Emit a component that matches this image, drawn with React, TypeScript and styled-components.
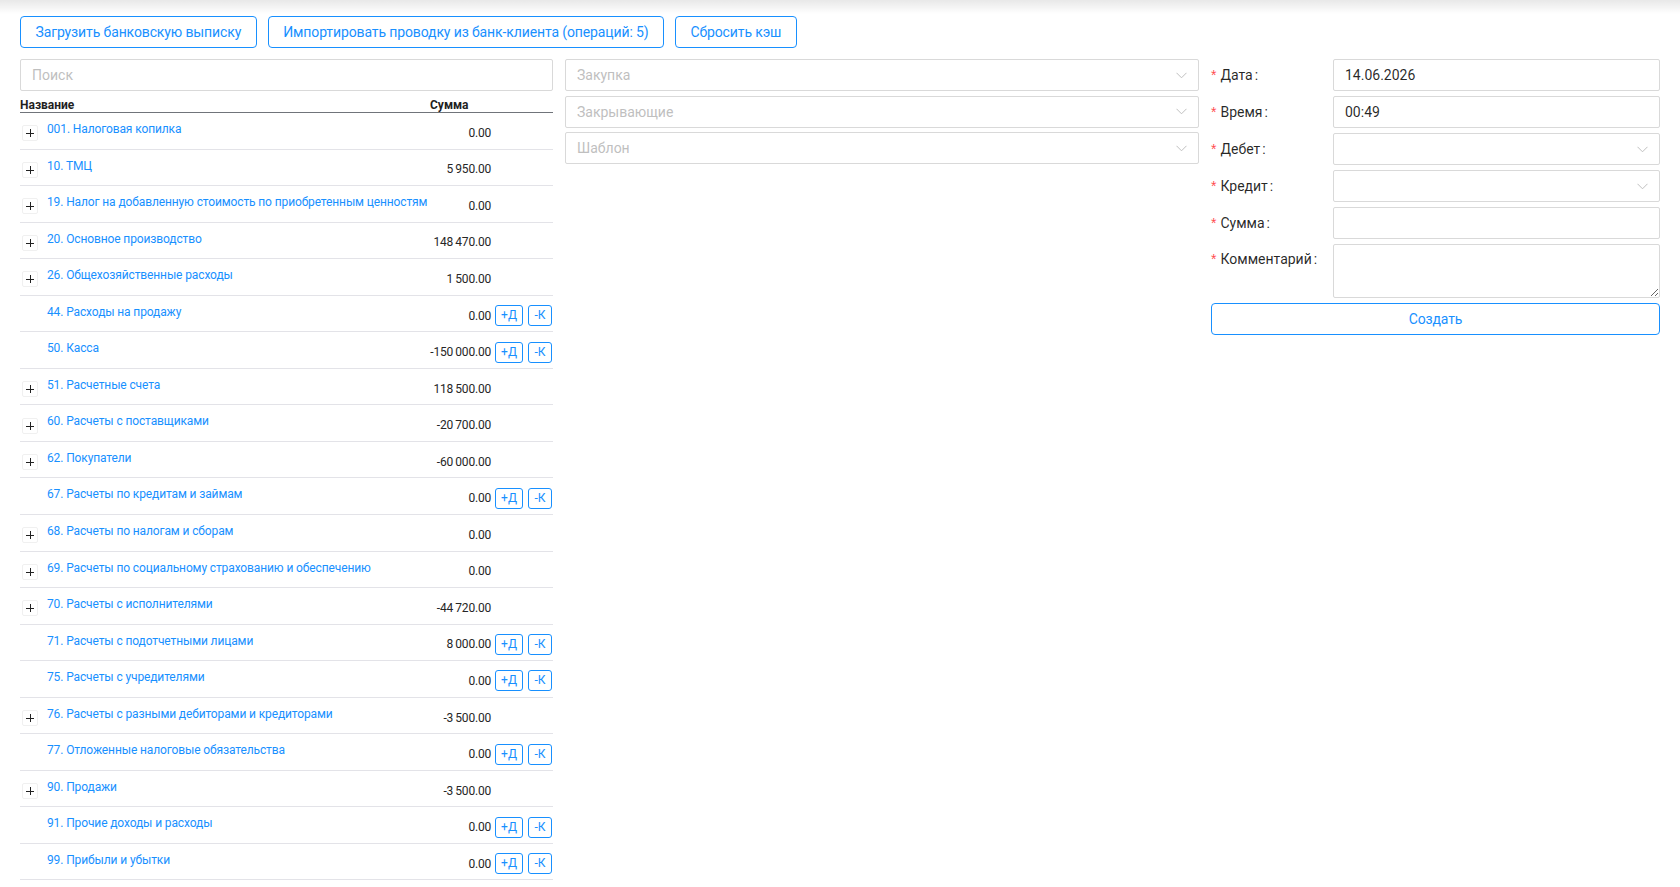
import styled, { createGlobalStyle } from "styled-components";

const GlobalStyle = createGlobalStyle`
    body {
        margin: 0;
        background: #fff;
        font-family: Roboto, "Noto Sans", sans-serif;
        color: rgba(0, 0, 0, 0.85);
    }
    * {
        box-sizing: border-box;
    }
`;

const Page = styled.div`
    padding: 0 20px 0 20px;
`;

const TopShade = styled.div`
    height: 14px;
    margin: 0 -20px 2px -20px;
    background: linear-gradient(to bottom, rgba(0, 0, 0, 0.09), rgba(0, 0, 0, 0));
`;

const Toolbar = styled.div`
    display: flex;
    gap: 11px;
`;

const Button = styled.button<{ $block?: boolean }>`
    height: 32px;
    padding: 0 14.5px;
    width: ${p => (p.$block ? "100%" : "auto")};
    border: 1px solid #1890ff;
    border-radius: 4px;
    background: #fff;
    color: #1890ff;
    font-family: inherit;
    font-size: 14px;
    letter-spacing: -0.12px;
    cursor: pointer;
`;

const Columns = styled.div`
    display: grid;
    grid-template-columns: 533px 634px 1fr;
    column-gap: 12px;
    margin-top: 11px;
    align-items: start;
`;

const Stack = styled.div<{ $gap?: number }>`
    display: flex;
    flex-direction: column;
    gap: ${p => p.$gap ?? 0}px;
`;

const TextInput = styled.input`
    height: 32px;
    width: 100%;
    padding: 0 11px;
    border: 1px solid #d9d9d9;
    border-radius: 2px;
    font-family: inherit;
    font-size: 14px;
    color: rgba(0, 0, 0, 0.85);
    outline: none;
    &::placeholder {
        color: #bfbfbf;
    }
`;

const TextArea = styled.textarea`
    height: 54px;
    width: 100%;
    padding: 4px 11px;
    border: 1px solid #d9d9d9;
    border-radius: 2px;
    font-family: inherit;
    font-size: 14px;
    resize: vertical;
    outline: none;
    display: block;
`;

/* account table */

const Table = styled.div`
    display: flex;
    flex-direction: column;
`;

const Grid = styled.div`
    display: grid;
    grid-template-columns: 27px 379px 65px 62px;
`;

const HeadRow = styled(Grid)`
    height: 22px;
    align-items: end;
    border-bottom: 1.5px solid #70747a;
    font-size: 12px;
    font-weight: 700;
    line-height: 13px;
    color: #1f1f1f;
`;

const HeadCell = styled.div<{ $span?: number; $pad?: number }>`
    grid-column: span ${p => p.$span ?? 1};
    padding-left: ${p => p.$pad ?? 0}px;
`;

const Row = styled(Grid)`
    height: 36.55px;
    align-items: center;
    border-bottom: 1px solid #e3e3e8;
    font-size: 12px;
    line-height: 17px;
`;

const Expander = styled.span`
    display: block;
    position: relative;
    width: 16px;
    height: 16px;
    margin: 5px 0 0 2px;
    border: 1px solid #f0f0f0;
    border-radius: 2px;
    background: #fff;
    &::before,
    &::after {
        content: "";
        position: absolute;
        background: #222;
    }
    &::before {
        left: 3px;
        right: 3px;
        top: 7px;
        height: 1px;
    }
    &::after {
        top: 3px;
        bottom: 3px;
        left: 7px;
        width: 1px;
    }
`;

const AccountLink = styled.a`
    color: #1890ff;
    text-decoration: none;
    white-space: nowrap;
    letter-spacing: -0.12px;
    align-self: start;
    padding-top: 8px;
    cursor: pointer;
`;

const Amount = styled.span`
    text-align: right;
    padding-top: 5px;
    color: #262626;
    white-space: nowrap;
    letter-spacing: -0.2px;
`;

const Actions = styled.div`
    display: flex;
    gap: 5px;
    padding: 4px 0 0 4px;
`;

const SmallButton = styled.button<{ $w: number }>`
    width: ${p => p.$w}px;
    height: 21px;
    padding: 0;
    border: 1px solid #1890ff;
    border-radius: 3px;
    background: #fff;
    color: #1890ff;
    font-family: inherit;
    font-size: 12px;
    line-height: 19px;
    cursor: pointer;
`;

/* selects */

const SelectBox = styled.div`
    height: 32px;
    display: flex;
    align-items: center;
    justify-content: space-between;
    padding: 0 11px;
    border: 1px solid #d9d9d9;
    border-radius: 2px;
    background: #fff;
    font-size: 14px;
`;

const Placeholder = styled.span`
    color: #bfbfbf;
`;

function Chevron() {
    return (
        <svg width="11" height="7" viewBox="0 0 11 7">
            <path d="M0.5 0.8 L5.5 5.8 L10.5 0.8" fill="none" stroke="#bfbfbf" strokeWidth="1" />
        </svg>
    );
}

function Select({ placeholder }: { placeholder?: string }) {
    return (
        <SelectBox>
            <Placeholder>{placeholder}</Placeholder>
            <Chevron />
        </SelectBox>
    );
}

/* posting form */

const FormRow = styled.div<{ $tall?: boolean }>`
    display: grid;
    grid-template-columns: 122px 1fr;
    align-items: ${p => (p.$tall ? "start" : "center")};
`;

const Label = styled.label<{ $tall?: boolean }>`
    font-size: 14px;
    line-height: 22px;
    color: rgba(0, 0, 0, 0.85);
    padding-top: ${p => (p.$tall ? "4px" : "0")};
    &::before {
        content: "*";
        color: #ff4d4f;
        margin-right: 4px;
        font-family: SimSun, sans-serif;
    }
    &::after {
        content: ":";
        margin: 0 8px 0 2px;
    }
`;

type Account = {
    code: string;
    name: string;
    amount: string;
    group?: boolean;
};

// thin space as thousands separator
const ts = "\u2009";

const accounts: Account[] = [
    { code: "001", name: "Налоговая копилка", amount: "0.00", group: true },
    { code: "10", name: "ТМЦ", amount: `5${ts}950.00`, group: true },
    { code: "19", name: "Налог на добавленную стоимость по приобретенным ценностям", amount: "0.00", group: true },
    { code: "20", name: "Основное производство", amount: `148${ts}470.00`, group: true },
    { code: "26", name: "Общехозяйственные расходы", amount: `1${ts}500.00`, group: true },
    { code: "44", name: "Расходы на продажу", amount: "0.00" },
    { code: "50", name: "Касса", amount: `-150${ts}000.00` },
    { code: "51", name: "Расчетные счета", amount: `118${ts}500.00`, group: true },
    { code: "60", name: "Расчеты с поставщиками", amount: `-20${ts}700.00`, group: true },
    { code: "62", name: "Покупатели", amount: `-60${ts}000.00`, group: true },
    { code: "67", name: "Расчеты по кредитам и займам", amount: "0.00" },
    { code: "68", name: "Расчеты по налогам и сборам", amount: "0.00", group: true },
    { code: "69", name: "Расчеты по социальному страхованию и обеспечению", amount: "0.00", group: true },
    { code: "70", name: "Расчеты с исполнителями", amount: `-44${ts}720.00`, group: true },
    { code: "71", name: "Расчеты с подотчетными лицами", amount: `8${ts}000.00` },
    { code: "75", name: "Расчеты с учредителями", amount: "0.00" },
    { code: "76", name: "Расчеты с разными дебиторами и кредиторами", amount: `-3${ts}500.00`, group: true },
    { code: "77", name: "Отложенные налоговые обязательства", amount: "0.00" },
    { code: "90", name: "Продажи", amount: `-3${ts}500.00`, group: true },
    { code: "91", name: "Прочие доходы и расходы", amount: "0.00" },
    { code: "99", name: "Прибыли и убытки", amount: "0.00" },
];

export default function App() {
    return (
        <Page>
            <GlobalStyle />
            <TopShade />
            <Toolbar>
                <Button>Загрузить банковскую выписку</Button>
                <Button>Импортировать проводку из банк-клиента (операций: 5)</Button>
                <Button>Сбросить кэш</Button>
            </Toolbar>

            <Columns>
                <Stack>
                    <TextInput placeholder="Поиск" />
                    <Table>
                        <HeadRow>
                            <HeadCell $span={2}>Название</HeadCell>
                            <HeadCell $pad={4}>Сумма</HeadCell>
                            <HeadCell />
                        </HeadRow>
                        {accounts.map(a => (
                            <Row key={a.code}>
                                <div>{a.group && <Expander />}</div>
                                <AccountLink>
                                    {a.code}. {a.name}
                                </AccountLink>
                                <Amount>{a.amount}</Amount>
                                {a.group ? (
                                    <div />
                                ) : (
                                    <Actions>
                                        <SmallButton $w={28}>+Д</SmallButton>
                                        <SmallButton $w={24}>-К</SmallButton>
                                    </Actions>
                                )}
                            </Row>
                        ))}
                    </Table>
                </Stack>

                <Stack $gap={4.6}>
                    <Select placeholder="Закупка" />
                    <Select placeholder="Закрывающие" />
                    <Select placeholder="Шаблон" />
                </Stack>

                <Stack $gap={5}>
                    <FormRow>
                        <Label>Дата</Label>
                        <TextInput defaultValue="14.06.2026" />
                    </FormRow>
                    <FormRow>
                        <Label>Время</Label>
                        <TextInput defaultValue="00:49" />
                    </FormRow>
                    <FormRow>
                        <Label>Дебет</Label>
                        <Select />
                    </FormRow>
                    <FormRow>
                        <Label>Кредит</Label>
                        <Select />
                    </FormRow>
                    <FormRow>
                        <Label>Сумма</Label>
                        <TextInput />
                    </FormRow>
                    <FormRow $tall>
                        <Label $tall>Комментарий</Label>
                        <TextArea />
                    </FormRow>
                    <Button $block>Создать</Button>
                </Stack>
            </Columns>
        </Page>
    );
}
